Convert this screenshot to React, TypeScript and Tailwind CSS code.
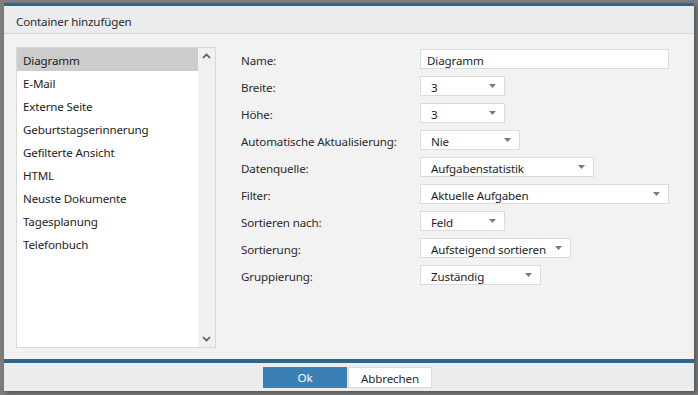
import React from 'react';

const items = [
    'Diagramm',
    'E-Mail',
    'Externe Seite',
    'Geburtstagserinnerung',
    'Gefilterte Ansicht',
    'HTML',
    'Neuste Dokumente',
    'Tagesplanung',
    'Telefonbuch',
];

type Field = { label: string; value: string; width: string; input?: boolean };

const fields: Field[] = [
    { label: 'Name:', value: 'Diagramm', width: 'w-[249px]', input: true },
    { label: 'Breite:', value: '3', width: 'w-[85px]' },
    { label: 'Höhe:', value: '3', width: 'w-[85px]' },
    { label: 'Automatische Aktualisierung:', value: 'Nie', width: 'w-[100px]' },
    { label: 'Datenquelle:', value: 'Aufgabenstatistik', width: 'w-[174px]' },
    { label: 'Filter:', value: 'Aktuelle Aufgaben', width: 'w-[249px]' },
    { label: 'Sortieren nach:', value: 'Feld', width: 'w-[85px]' },
    { label: 'Sortierung:', value: 'Aufsteigend sortieren', width: 'w-[151px]' },
    { label: 'Gruppierung:', value: 'Zuständig', width: 'w-[121px]' },
];

function Caret() {
    return (
        <svg width="7" height="4" viewBox="0 0 7 4" className="shrink-0">
            <path d="M0 0h7L3.5 4z" fill="#7a7a7a" />
        </svg>
    );
}

function Chevron({ up }: { up?: boolean }) {
    return (
        <svg width="9" height="6" viewBox="0 0 9 6">
            <path
                d={up ? 'M1 5l3.5-3.5L8 5' : 'M1 1l3.5 3.5L8 1'}
                fill="none"
                stroke="#555"
                strokeWidth="1.6"
            />
        </svg>
    );
}

export default function App() {
    return (
        <div className="w-[698px] h-[395px] bg-[#7d7d7d] pt-[3px] pl-[4px] overflow-hidden font-['Noto_Sans',sans-serif] text-[11.6px] tracking-[-0.15px] text-[#1e1e1e]">
            <div className="w-[690px] h-[388px] bg-[#f2f2f2] flex flex-col shadow-[2px_2px_4px_rgba(0,0,0,0.35)]">
                {/* Header */}
                <div className="h-[3px] bg-[#2d6892]" />
                <div className="h-[28px] bg-[#ebecee] border-b border-[#d6d7d9] flex items-center pl-[12px] pt-[5px] text-[#2a2a2a]">
                    Container hinzufügen
                </div>

                {/* Body */}
                <div className="flex-1 flex pt-[13px] pl-[12px]">
                    <div className="w-[200px] h-[301px] bg-white border border-[#d9d9d9] flex">
                        <div className="flex-1 flex flex-col">
                            {items.map((item, i) => (
                                <div
                                    key={item}
                                    className={`h-[23px] shrink-0 flex items-center pl-[6px] pt-[3px] ${i === 0 ? 'bg-[#cccccc]' : ''}`}
                                >
                                    {item}
                                </div>
                            ))}
                        </div>
                        <div className="w-[17px] bg-[#f0f0f0] flex flex-col items-center justify-between py-[5px]">
                            <Chevron up />
                            <Chevron />
                        </div>
                    </div>

                    <div className="flex flex-col gap-[7px] pl-[25px] pt-[2px]">
                        {fields.map((f) => (
                            <div key={f.label} className="flex items-center h-[20px]">
                                <div className="w-[179px] pt-[3px] text-[#2a2a2a]">{f.label}</div>
                                <div
                                    className={`${f.width} h-[20px] bg-white border border-[#dcdcdc] flex items-center ${f.input ? 'pl-[6px]' : 'pl-[10px] pr-[8px] justify-between'}`}
                                >
                                    <span className="pt-[3px]">{f.value}</span>
                                    {!f.input && <Caret />}
                                </div>
                            </div>
                        ))}
                    </div>
                </div>

                {/* Footer */}
                <div className="h-[4px] bg-[#2a6690]" />
                <div className="h-[28px] bg-[#ebecee] flex justify-center items-center pr-[3px]">
                    <button className="w-[84px] h-[21px] bg-[#3a80b6] text-white pt-[2px]">Ok</button>
                    <button className="w-[84px] h-[21px] bg-white border border-[#dcdcdc] ml-[1px] text-[#2a2a2a] pt-[2px]">
                        Abbrechen
                    </button>
                </div>
            </div>
        </div>
    );
}
